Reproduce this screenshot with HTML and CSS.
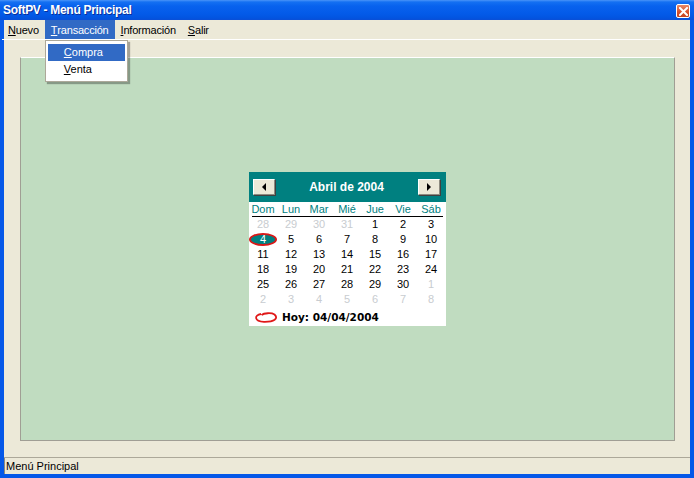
FILE: index.html
```html
<!DOCTYPE html>
<html lang="es">
<head>
<meta charset="utf-8">
<title>SoftPV - Menú Principal</title>
<link rel="stylesheet" href="styles.css">
</head>
<body>
<div class="window">
  <div class="titlebar">
    <span class="title">SoftPV - Menú Principal</span>
    <span class="close"><svg width="9" height="9" viewBox="0 0 9 9"><path d="M1 1 L8 8 M8 1 L1 8" stroke="#fff" stroke-width="2" stroke-linecap="square"/></svg></span>
  </div>
  <div class="frame">
    <div class="client">
      <div class="menubar">
        <span class="mi"><u>N</u>uevo</span>
        <span class="mi active"><u>T</u>ransacción
          <div class="dropdown">
            <div class="di hl"><u>C</u>ompra</div>
            <div class="di"><u>V</u>enta</div>
          </div>
        </span>
        <span class="mi"><u>I</u>nformación</span>
        <span class="mi"><u>S</u>alir</span>
      </div>
      <div class="workspace">
        <div class="panel">
          <div class="calendar">
            <div class="cal-head">
              <span class="nav"><svg width="5" height="8" viewBox="0 0 5 8"><path d="M4 0 L0 4 L4 8 Z" fill="#000"/></svg></span>
              <span class="month">Abril de 2004</span>
              <span class="nav"><svg width="5" height="8" viewBox="0 0 5 8"><path d="M1 0 L5 4 L1 8 Z" fill="#000"/></svg></span>
            </div>
            <div class="dow">
              <span>Dom</span><span>Lun</span><span>Mar</span><span>Mié</span><span>Jue</span><span>Vie</span><span>Sáb</span>
            </div>
            <div class="rule"></div>
            <div class="days">
              <span class="o">28</span><span class="o">29</span><span class="o">30</span><span class="o">31</span><span>1</span><span>2</span><span>3</span>
              <span class="sel">4</span><span>5</span><span>6</span><span>7</span><span>8</span><span>9</span><span>10</span>
              <span>11</span><span>12</span><span>13</span><span>14</span><span>15</span><span>16</span><span>17</span>
              <span>18</span><span>19</span><span>20</span><span>21</span><span>22</span><span>23</span><span>24</span>
              <span>25</span><span>26</span><span>27</span><span>28</span><span>29</span><span>30</span><span class="o">1</span>
              <span class="o">2</span><span class="o">3</span><span class="o">4</span><span class="o">5</span><span class="o">6</span><span class="o">7</span><span class="o">8</span>
            </div>
            <div class="today">
              <svg width="28" height="13" viewBox="0 0 28 13"><path d="M9 3 C2 4 2 10.5 12 10.8 C22 11 27 7.5 22.5 3.5 C19.5 1.5 12 2 9.5 4" fill="none" stroke="#e01818" stroke-width="1.8"/></svg>
              <span>Hoy: 04/04/2004</span>
            </div>
          </div>
        </div>
      </div>
      <div class="statusbar"><span class="status">Menú Principal</span></div>
    </div>
  </div>
</div>
</body>
</html>
```

FILE: styles.css
```css
html, body {
  margin: 0;
  padding: 0;
}
body {
  width: 694px;
  height: 478px;
  overflow: hidden;
  font-family: "Liberation Sans", Arial, sans-serif;
  font-size: 11px;
  color: #000;
}
.window {
  width: 694px;
  height: 478px;
  display: flex;
  flex-direction: column;
}
.titlebar {
  height: 20px;
  flex: none;
  display: flex;
  align-items: center;
  justify-content: space-between;
  padding: 0 4px 0 3px;
  background: linear-gradient(to bottom, #4a94f8 0px, #1470f2 2px, #0862ee 6px, #035ae8 14px, #0254e0 18px, #0a4fd6 20px);
}
.title {
  color: #fff;
  font-weight: bold;
  font-size: 12px;
  letter-spacing: -0.3px;
  text-shadow: 1px 1px 0 #0a2f9a;
}
.close {
  width: 12px;
  height: 12px;
  border: 1px solid #fff;
  border-radius: 2px;
  background: linear-gradient(to bottom, #e88a6a, #d6502a 60%, #c44420);
  display: flex;
  align-items: center;
  justify-content: center;
  margin-top: 2px;
}
.frame {
  flex: 1;
  display: flex;
  border-style: solid;
  border-color: #0558e8;
  border-width: 0 4px 4px 4px;
  min-height: 0;
}
.client {
  flex: 1;
  display: flex;
  flex-direction: column;
  background: #ece9d8;
}
.menubar {
  height: 19px;
  flex: none;
  display: flex;
  align-items: stretch;
  border-bottom: 1px solid #fff;
  margin-left: -2px;
  letter-spacing: -0.2px;
}
.mi {
  position: relative;
  padding: 0 6px;
  display: flex;
  align-items: center;
}
.mi.active {
  background: #316ac5;
  color: #fff;
}
.dropdown {
  position: absolute;
  left: 0;
  top: 20px;
  width: 77px;
  padding: 3px 2px;
  background: #fff;
  color: #000;
  border: 1px solid #aca899;
  box-shadow: 2px 2px 1px rgba(0,0,0,0.3);
  z-index: 5;
  letter-spacing: 0;
}
.di {
  height: 17px;
  line-height: 17px;
  padding-left: 16px;
}
.di.hl {
  background: #316ac5;
  color: #fff;
}
.workspace {
  flex: 1;
  display: flex;
  padding: 17px 15px 16px 16px;
}
.panel {
  flex: 1;
  display: flex;
  align-items: center;
  justify-content: center;
  background: #c0dcc0;
  border: 1px solid #a09e94;
  border-top-color: #ffffff;
}
.calendar {
  width: 197px;
  background: #fff;
  padding-bottom: 1px;
}
.cal-head {
  height: 30px;
  background: #008080;
  display: flex;
  align-items: center;
  justify-content: space-between;
  padding: 0 6px 0 4px;
}
.nav {
  width: 20px;
  height: 14px;
  background: #ece9d8;
  border: 1px solid;
  border-color: #fff #8d8b80 #8d8b80 #fff;
  box-shadow: 1px 1px 0 #404040;
  display: flex;
  align-items: center;
  justify-content: center;
}
.month {
  color: #fff;
  font-weight: bold;
  font-size: 12px;
}
.dow, .days {
  display: grid;
  grid-template-columns: repeat(7, 28px);
}
.dow span {
  height: 14px;
  line-height: 15px;
  text-align: center;
  color: #008080;
}
.rule {
  height: 1px;
  background: #000;
  margin: 0 3px;
}
.days span {
  position: relative;
  height: 15px;
  line-height: 15px;
  text-align: center;
}
.days .o {
  color: #c8ccd0;
}
.days .sel {
  color: #fff;
  z-index: 0;
}
.days .sel::before {
  content: "";
  position: absolute;
  left: 0;
  top: 1px;
  width: 24px;
  height: 9px;
  border: 2px solid #d81818;
  border-radius: 50%;
  background: #008080;
  z-index: -1;
}
.today {
  height: 16px;
  margin-top: 2px;
  display: flex;
  align-items: center;
  padding-left: 3px;
  gap: 2px;
  font-family: "DejaVu Sans", sans-serif;
  font-weight: bold;
  font-size: 10.5px;
}
.statusbar {
  height: 16px;
  flex: none;
  border-top: 1px solid #aca899;
  display: flex;
}
.status {
  flex: 1;
  border-left: 1px solid #8d8b80;
  padding-left: 1px;
  line-height: 16px;
  margin-right: 1px;
}
```
